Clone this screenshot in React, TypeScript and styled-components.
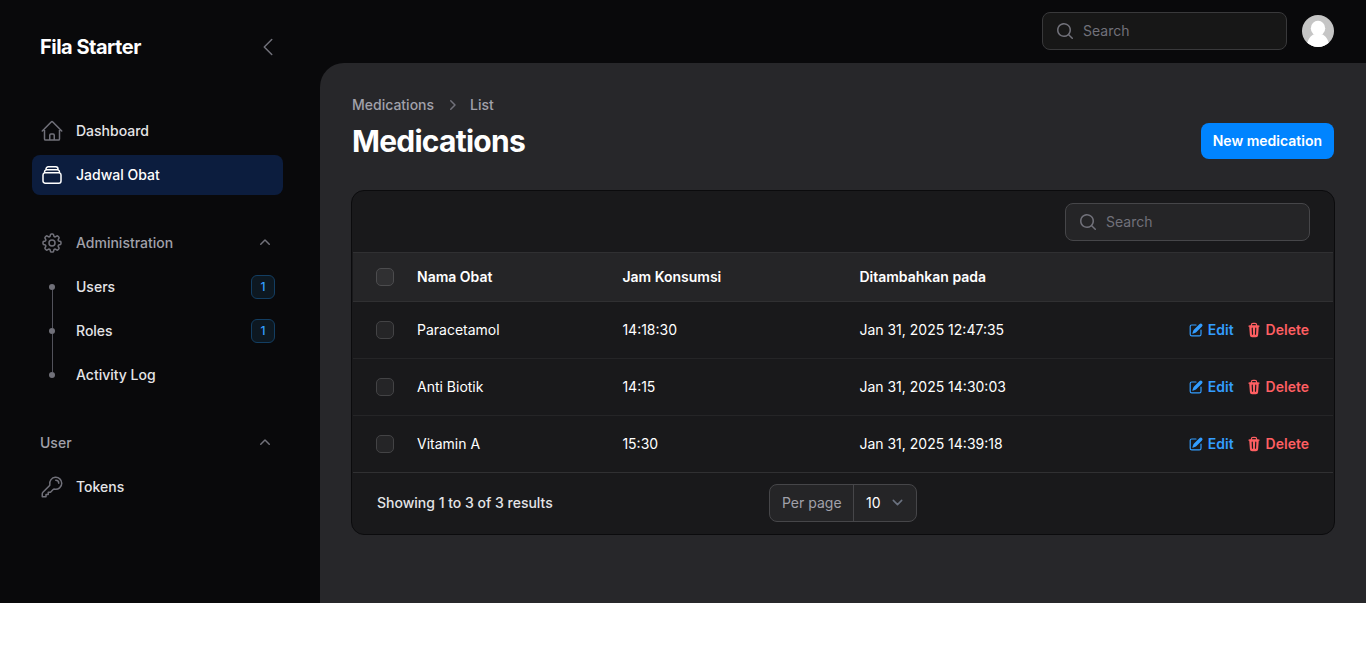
import React from "react";
import styled, { createGlobalStyle, css } from "styled-components";
import {
  HiOutlineHome,
  HiOutlineRectangleStack,
  HiOutlineCog8Tooth,
  HiOutlineKey,
  HiMiniMagnifyingGlass,
  HiOutlineChevronLeft,
  HiMiniChevronUp,
  HiMiniChevronRight,
  HiMiniPencilSquare,
  HiMiniTrash,
} from "react-icons/hi2";

const GlobalStyle = createGlobalStyle`
  *, *::before, *::after { box-sizing: border-box; }
  body {
    margin: 0;
    background: #fff;
    font-family: Inter, "Liberation Sans", sans-serif;
    font-size: 14px;
    line-height: 20px;
  }
`;

const Shell = styled.div`
  display: flex;
  height: 603px;
  background: #09090b;
  color: #fff;
`;

const Sidebar = styled.aside`
  width: 320px;
  flex: none;
  padding: 0 37px 0 32px;
`;

const SidebarHeader = styled.header`
  display: flex;
  align-items: center;
  justify-content: space-between;
  height: 64px;
  margin-top: 15px;
  padding: 0 3px 0 8px;
  svg { color: #71717a; }
`;

const Brand = styled.div`
  font-size: 20px;
  font-weight: 700;
  letter-spacing: -0.5px;
`;

const Nav = styled.nav`
  display: flex;
  flex-direction: column;
  gap: 28px;
  margin-top: 32px;
`;

const Group = styled.section`
  display: flex;
  flex-direction: column;
  gap: 4px;
`;

const rowBox = css`
  display: flex;
  align-items: center;
  gap: 12px;
  height: 40px;
  padding: 0 8px;
  border-radius: 8px;
  font-weight: 500;
`;

const GroupHeader = styled.div`
  ${rowBox}
  color: #a1a1aa;
  svg { color: #71717a; }
`;

const NavItem = styled.a<{ $active?: boolean }>`
  ${rowBox}
  color: ${(p) => (p.$active ? "#fff" : "#e4e4e7")};
  background: ${(p) => (p.$active ? "#0c1d3e" : "transparent")};
  svg { color: ${(p) => (p.$active ? "#fff" : "#71717a")}; }
`;

const Grow = styled.span`
  flex: 1;
`;

const Rail = styled.span<{ $first?: boolean; $last?: boolean }>`
  display: flex;
  flex-direction: column;
  align-items: center;
  width: 24px;
  height: 44px;
  &::before, &::after {
    content: "";
    flex: 1;
    width: 1px;
    margin-left: 1px;
    background: #52525b;
  }
  &::before { opacity: ${(p) => (p.$first ? 0 : 1)}; }
  &::after { opacity: ${(p) => (p.$last ? 0 : 1)}; }
`;

const Dot = styled.i`
  width: 6px;
  height: 6px;
  border-radius: 50%;
  background: #71717a;
`;

const Badge = styled.span`
  display: grid;
  place-items: center;
  width: 24px;
  height: 24px;
  border: 1px solid #133e62;
  border-radius: 6px;
  background: #0d1821;
  color: #339eff;
  font-size: 12px;
  line-height: 16px;
`;

const Content = styled.div`
  flex: 1;
  display: flex;
  flex-direction: column;
`;

const Topbar = styled.header`
  display: flex;
  align-items: center;
  justify-content: flex-end;
  gap: 15px;
  height: 63px;
  padding: 0 32px 1px 0;
`;

const SearchBox = styled.label<{ $raised?: boolean }>`
  display: flex;
  align-items: center;
  gap: 8px;
  width: 245px;
  height: 38px;
  padding: 0 12px;
  border: 1px solid ${(p) => (p.$raised ? "#464649" : "#39393b")};
  border-radius: 8px;
  background: ${(p) => (p.$raised ? "#252527" : "#171717")};
  color: #71717a;
`;

const Avatar = styled.svg`
  border-radius: 50%;
`;

const Main = styled.main`
  flex: 1;
  padding: 32px 31px 0;
  border-top-left-radius: 24px;
  background: #27272a;
`;

const PageHeader = styled.div`
  display: flex;
  align-items: flex-end;
  justify-content: space-between;
  padding: 0 1px;
`;

const Breadcrumbs = styled.div`
  display: flex;
  align-items: center;
  gap: 8px;
  margin-bottom: 8px;
  color: #a1a1aa;
  font-weight: 500;
  svg { color: #71717a; }
`;

const Title = styled.h1`
  margin: 0;
  font-size: 30px;
  line-height: 36px;
  font-weight: 700;
  letter-spacing: -0.75px;
`;

const PrimaryButton = styled.button`
  height: 36px;
  padding: 0 12px;
  border: 0;
  border-radius: 8px;
  background: #0084ff;
  color: #fff;
  font: 600 14px/20px Inter, sans-serif;
`;

const Card = styled.section`
  margin-top: 31px;
  padding: 0 1px;
  border: 1px solid #0b0b0d;
  border-radius: 13px;
  background: #19191b;
`;

const CardToolbar = styled.div`
  display: flex;
  align-items: center;
  justify-content: flex-end;
  height: 61px;
  padding: 1px 23px 0 0;
`;

const Row = styled.div`
  display: grid;
  grid-template-columns: 41px 205.4px 237px 1fr auto;
  align-items: center;
  height: 57px;
  padding: 0 24px 0 23px;
  border-bottom: 1px solid #252527;
  &:last-child { border-bottom: 0; height: 56px; }
`;

const HeadRow = styled(Row)`
  height: 50px;
  border-top: 1px solid #303032;
  border-bottom-color: #303032;
  background: #252527;
  font-weight: 600;
`;

const Checkbox = styled.span<{ $head?: boolean }>`
  width: 18px;
  height: 18px;
  border: 1px solid ${(p) => (p.$head ? "#4c4c4e" : "#434345")};
  border-radius: 5px;
  background: ${(p) => (p.$head ? "#303032" : "#252527")};
`;

const Actions = styled.div`
  display: flex;
  gap: 12px;
`;

const Action = styled.a<{ $danger?: boolean }>`
  display: flex;
  align-items: center;
  gap: 4px;
  color: ${(p) => (p.$danger ? "#ff5f62" : "#339dff")};
  font-weight: 600;
`;

const CardFooter = styled.footer`
  display: grid;
  grid-template-columns: 1fr auto 1fr;
  align-items: center;
  height: 62px;
  padding: 0 24px 2px;
  border-top: 1px solid #303032;
  color: #e4e4e7;
  font-weight: 500;
`;

const PerPage = styled.div`
  display: flex;
  width: 148px;
  height: 38px;
  border: 1px solid #464649;
  border-radius: 8px;
  background: #252527;
  color: #a1a1aa;
  font-weight: 400;
`;

const PerPageLabel = styled.span`
  display: flex;
  align-items: center;
  width: 84px;
  padding-left: 12px;
  border-right: 1px solid #464649;
`;

const PerPageValue = styled.span`
  flex: 1;
  display: flex;
  align-items: center;
  justify-content: space-between;
  padding: 0 8px 0 12px;
  color: #fff;
`;

const subItems = [
  { label: "Users", badge: "1" },
  { label: "Roles", badge: "1" },
  { label: "Activity Log" },
];

const medications = [
  { name: "Paracetamol", time: "14:18:30", added: "Jan 31, 2025 12:47:35" },
  { name: "Anti Biotik", time: "14:15", added: "Jan 31, 2025 14:30:03" },
  { name: "Vitamin A", time: "15:30", added: "Jan 31, 2025 14:39:18" },
];

function Search({ raised }: { raised?: boolean }) {
  return (
    <SearchBox $raised={raised}>
      <HiMiniMagnifyingGlass size={20} />
      Search
    </SearchBox>
  );
}

export default function App() {
  return (
    <>
      <GlobalStyle />
      <Shell>
        <Sidebar>
          <SidebarHeader>
            <Brand>Fila Starter</Brand>
            <HiOutlineChevronLeft size={24} />
          </SidebarHeader>
          <Nav>
            <Group>
              <NavItem>
                <HiOutlineHome size={24} />
                Dashboard
              </NavItem>
              <NavItem $active>
                <HiOutlineRectangleStack size={24} />
                Jadwal Obat
              </NavItem>
            </Group>
            <Group>
              <GroupHeader>
                <HiOutlineCog8Tooth size={24} />
                <Grow>Administration</Grow>
                <HiMiniChevronUp size={20} />
              </GroupHeader>
              {subItems.map((item, i) => (
                <NavItem key={item.label}>
                  <Rail $first={i === 0} $last={i === subItems.length - 1}>
                    <Dot />
                  </Rail>
                  <Grow>{item.label}</Grow>
                  {item.badge && <Badge>{item.badge}</Badge>}
                </NavItem>
              ))}
            </Group>
            <Group>
              <GroupHeader>
                <Grow>User</Grow>
                <HiMiniChevronUp size={20} />
              </GroupHeader>
              <NavItem>
                <HiOutlineKey size={24} />
                Tokens
              </NavItem>
            </Group>
          </Nav>
        </Sidebar>
        <Content>
          <Topbar>
            <Search />
            <Avatar width="32" height="32" viewBox="0 0 32 32">
              <rect width="32" height="32" fill="#c5c5c5" />
              <ellipse cx="16" cy="13.2" rx="7.2" ry="7.4" fill="#fff" />
              <path d="M4.5 32C5 25 9 20.3 12 19.3h8c3 1 7 5.7 7.5 12.7z" fill="#fff" />
            </Avatar>
          </Topbar>
          <Main>
            <PageHeader>
              <div>
                <Breadcrumbs>
                  <span>Medications</span>
                  <HiMiniChevronRight size={20} />
                  <span>List</span>
                </Breadcrumbs>
                <Title>Medications</Title>
              </div>
              <PrimaryButton>New medication</PrimaryButton>
            </PageHeader>
            <Card>
              <CardToolbar>
                <Search raised />
              </CardToolbar>
              <div>
                <HeadRow>
                  <Checkbox $head />
                  <span>Nama Obat</span>
                  <span>Jam Konsumsi</span>
                  <span>Ditambahkan pada</span>
                </HeadRow>
                {medications.map((m) => (
                  <Row key={m.name}>
                    <Checkbox />
                    <span>{m.name}</span>
                    <span>{m.time}</span>
                    <span>{m.added}</span>
                    <Actions>
                      <Action>
                        <HiMiniPencilSquare size={16} />
                        Edit
                      </Action>
                      <Action $danger>
                        <HiMiniTrash size={16} />
                        Delete
                      </Action>
                    </Actions>
                  </Row>
                ))}
              </div>
              <CardFooter>
                <span>Showing 1 to 3 of 3 results</span>
                <PerPage>
                  <PerPageLabel>Per page</PerPageLabel>
                  <PerPageValue>
                    10
                    <svg width="21" height="21" viewBox="0 0 20 20" fill="none">
                      <path d="M6 8l4 4 4-4" stroke="#6b7280" strokeWidth="1.5" strokeLinecap="round" strokeLinejoin="round" />
                    </svg>
                  </PerPageValue>
                </PerPage>
              </CardFooter>
            </Card>
          </Main>
        </Content>
      </Shell>
    </>
  );
}
